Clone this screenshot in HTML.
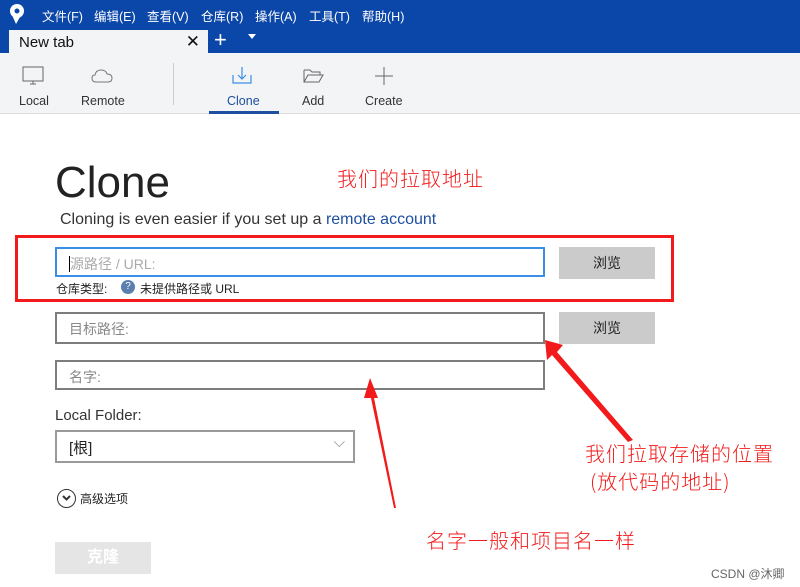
<!DOCTYPE html>
<html><head><meta charset="utf-8"><style>
*{margin:0;padding:0;box-sizing:border-box}
body{width:800px;height:587px;background:#fff;font-family:"Liberation Sans","Noto Sans CJK SC",sans-serif;position:relative;overflow:hidden;color:#222}
.a{position:absolute}
#hdr{left:0;top:0;width:800px;height:53px;background:#0b47a8}
.menu{top:6px;font-size:12.5px;color:#fff}
#tab{left:9px;top:30px;width:199px;height:24px;background:#f3f4f5;font-size:15px;padding:4px 10px;color:#111}
#tb{left:0;top:53px;width:800px;height:61px;background:#f3f4f5;border-bottom:1px solid #ddd}
.tl{font-size:12.5px;color:#333;top:94px}
.inp{border:2px solid #7d7d7d;background:#fff;font-size:14px;color:#888;padding:5px 12px}
.btn{background:#cbcbcb;font-size:14px;color:#222;text-align:center;line-height:33px}
.red{color:#f21a1a;font-size:20px;letter-spacing:1px;font-family:"Noto Sans CJK SC",sans-serif;font-weight:300}
</style></head><body>
<div id="hdr" class="a"></div>
<svg class="a" style="left:7px;top:3px" width="20" height="22" viewBox="0 0 20 22"><circle cx="10" cy="8" r="7" fill="#fff"/><circle cx="10" cy="8" r="2.5" fill="#0b47a8"/><path d="M5 12 L9 21 L13 14Z" fill="#fff"/></svg>
<div class="a menu" style="left:42px">文件(F)</div>
<div class="a menu" style="left:94px">编辑(E)</div>
<div class="a menu" style="left:147px">查看(V)</div>
<div class="a menu" style="left:201px">仓库(R)</div>
<div class="a menu" style="left:255px">操作(A)</div>
<div class="a menu" style="left:309px">工具(T)</div>
<div class="a menu" style="left:362px">帮助(H)</div>
<div id="tab" class="a">New tab<span style="position:absolute;right:8px;top:2px;font-size:17px">✕</span></div>
<div class="a" style="left:214px;top:27px;color:#fff;font-size:22px">+</div>
<div class="a" style="left:248px;top:34px;width:0;height:0;border-left:4px solid transparent;border-right:4px solid transparent;border-top:5px solid #fff"></div>
<div id="tb" class="a"></div>
<svg class="a" style="left:22px;top:66px" width="24" height="20" fill="none" stroke="#666"><rect x="1" y="1" width="20" height="14"/><path d="M8 18h6M11 15v3"/></svg>
<svg class="a" style="left:91px;top:68px" width="24" height="16" fill="none" stroke="#777"><path d="M5 14 Q1 14 1 10 Q1 7 4 7 Q5 2 10 2 Q15 2 16 6 Q21 6 21 10 Q21 14 17 14Z"/></svg>
<div class="a" style="left:173px;top:63px;width:1px;height:42px;background:#ccc"></div>
<svg class="a" style="left:232px;top:66px" width="22" height="20" fill="none" stroke="#3a8ee6" stroke-width="1.2"><path d="M1 9v8h18V9M10 1v12M6 9l4 4 4-4"/></svg>
<svg class="a" style="left:303px;top:68px" width="22" height="16" fill="none" stroke="#666"><path d="M1 2h6l2 2h8v3M1 2v12h15l4-7H5L1 14"/></svg>
<svg class="a" style="left:374px;top:66px" width="20" height="20" stroke="#666"><path d="M10 1v18M1 10h18"/></svg>
<div class="a tl" style="left:19px">Local</div>
<div class="a tl" style="left:81px">Remote</div>
<div class="a tl" style="left:227px;color:#1f4fa0">Clone</div>
<div class="a tl" style="left:302px">Add</div>
<div class="a tl" style="left:365px">Create</div>
<div class="a" style="left:209px;top:111px;width:70px;height:3px;background:#1f4fa0"></div>

<div class="a" style="left:55px;top:158px;font-size:44px;color:#222">Clone</div>
<div class="a" style="left:60px;top:211px;font-size:16px;color:#333">Cloning is even easier if you set up a <span style="color:#1f4fa0">remote account</span></div>
<div class="a red" style="left:337px;top:163px">我们的拉取地址</div>
<div class="a" style="left:15px;top:235px;width:659px;height:67px;border:3px solid #f21a1a"></div>
<div class="a inp" style="left:55px;top:247px;width:490px;height:30px;border-color:#3a8ee6;color:#aaa"><span style="border-left:1px solid #000"></span>源路径 / URL:</div>
<div class="a btn" style="left:559px;top:247px;width:96px;height:32px">浏览</div>
<div class="a" style="left:56px;top:280px;font-size:12px;color:#222">仓库类型:</div>
<div class="a" style="left:121px;top:280px;width:14px;height:14px;border-radius:50%;background:#5b7fae;color:#fff;font-size:10px;text-align:center;line-height:14px">?</div>
<div class="a" style="left:140px;top:280px;font-size:12px;color:#222">未提供路径或 URL</div>
<div class="a inp" style="left:55px;top:312px;width:490px;height:32px">目标路径:</div>
<div class="a btn" style="left:559px;top:312px;width:96px;height:32px">浏览</div>
<div class="a inp" style="left:55px;top:360px;width:490px;height:30px">名字:</div>
<div class="a" style="left:55px;top:407px;font-size:15px;color:#333">Local Folder:</div>
<div class="a inp" style="left:55px;top:430px;width:300px;height:33px;border-color:#9a9a9a;color:#222;font-size:15px">[根]<span style="position:absolute;right:8px;top:2px;color:#888">⌵</span></div>
<div class="a" style="left:57px;top:489px;width:19px;height:19px;border:1.5px solid #333;border-radius:50%"></div>
<svg class="a" style="left:61px;top:494px" width="11" height="8"><path d="M2 2l3.5 3.5L9 2" stroke="#333" stroke-width="2" fill="none"/></svg>
<div class="a" style="left:80px;top:490px;font-size:12px;color:#222">高级选项</div>
<div class="a" style="left:55px;top:542px;width:96px;height:32px;background:#e5e5e5;color:#fff;font-size:16px;font-weight:bold;text-align:center;line-height:32px">克隆</div>
<svg class="a" style="left:0;top:0" width="800" height="587"><polygon points="545,340 563,345 557,352 633,440 628,442 552,355 547,360" fill="#f21a1a"/><polygon points="370,378 378,398 374,398 396,508 394,508 371,398 364,398" fill="#f21a1a"/></svg>
<div class="a red" style="left:585px;top:438px">我们拉取存储的位置</div>
<div class="a red" style="left:590px;top:466px">(放代码的地址)</div>
<div class="a red" style="left:426px;top:525px">名字一般和项目名一样</div>
<div class="a" style="left:711px;top:565px;font-size:12px;color:#666">CSDN @沐卿</div>
</body></html>
